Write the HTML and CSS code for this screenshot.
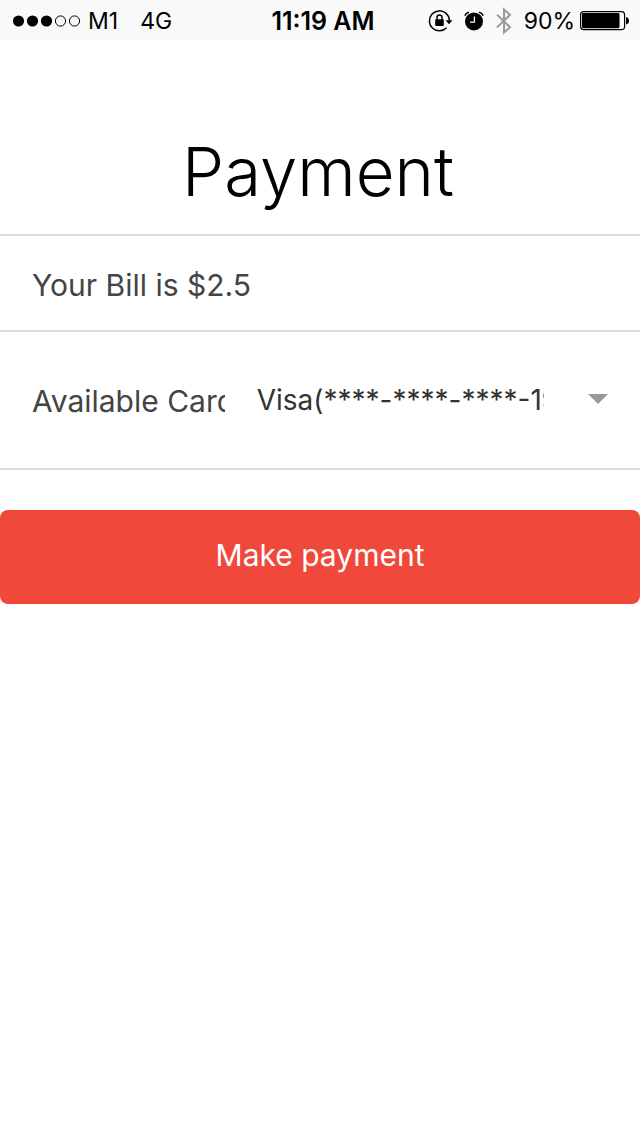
FILE: index.html
```html
<!DOCTYPE html>
<html lang="en">
<head>
<meta charset="utf-8">
<meta name="viewport" content="width=device-width, initial-scale=1">
<title>Payment</title>
<link rel="stylesheet" href="styles.css">
</head>
<body>
<header class="status">
  <div class="status-left">
    <svg width="68" height="14" viewBox="0 0 68 14" aria-hidden="true">
      <circle cx="5.5" cy="7" r="5.6"/><circle cx="19.5" cy="7" r="5.6"/><circle cx="33.5" cy="7" r="5.6"/>
      <g fill="none" stroke="#000" stroke-width="1"><circle cx="47.5" cy="7" r="5.1"/><circle cx="61.5" cy="7" r="5.1"/></g>
    </svg>
    <span class="carrier">M1</span>
    <span>4G</span>
  </div>
  <div class="status-time">11:19 AM</div>
  <div class="status-right">
    <svg width="25" height="24" viewBox="0 0 25 24" aria-hidden="true">
      <path d="M17.8 4.2A10 10 0 0 1 21.4 11.5M18.6 18.8A10 10 0 1 1 17.8 4.2" fill="none" stroke="#000" stroke-width="1.5"/>
      <path d="M17.6 11.2h6.8L21 15.2z"/>
      <rect x="7.2" y="10.2" width="8.6" height="6.8" rx=".8"/>
      <path d="M9 11V8.6a2.5 2.5 0 0 1 5 0V11" fill="none" stroke="#000" stroke-width="1.5"/>
    </svg>
    <svg class="alarm" width="20" height="20" viewBox="0 0 20 20" aria-hidden="true">
      <circle cx="10" cy="10.4" r="9"/>
      <path d="M.8 4.6Q2 1.8 5 1.2M19.2 4.6Q18 1.8 15 1.2" fill="none" stroke="#000" stroke-width="1.5"/>
      <path d="M10.4 5.6v5.6H6" fill="none" stroke="#f9f9f9" stroke-width="1.3"/>
    </svg>
    <svg width="16" height="28" viewBox="0 0 16 28" aria-hidden="true">
      <path d="M1 7.6l13 12.6-6 5.4V2.4l6 5.4L1 20.4" fill="none" stroke="#999" stroke-width="2"/>
    </svg>
    <span class="charge">90%</span>
    <svg width="49" height="20" viewBox="0 0 49 20" aria-hidden="true">
      <rect x=".6" y=".6" width="44" height="18" rx="3.2" fill="none" stroke="#000" stroke-width="1.2"/>
      <rect x="2" y="2" width="37.5" height="15.2" rx="1.4"/>
      <path d="M46 6q3 .5 3 3.7t-3 3.7z"/>
    </svg>
  </div>
</header>
<main>
  <h1 class="title">Payment</h1>
  <form class="form">
    <p class="row bill">Your Bill is $2.5</p>
    <div class="row card">
      <label class="card-label" for="card">Available Card</label>
      <span class="card-select">
        <select id="card"><option>Visa(****-****-****-1991)</option></select>
        <svg width="20" height="10" viewBox="0 0 20 10" aria-hidden="true"><path d="M0 0h20L10 10z" fill="#999"/></svg>
      </span>
    </div>
    <button class="pay" type="button">Make payment</button>
  </form>
</main>
</body>
</html>
```
FILE: styles.css
```css
* { box-sizing: border-box; }
body {
  margin: 0;
  background: #fff;
  color: #000;
  font-family: Inter, "Liberation Sans", sans-serif;
}
svg { display: block; flex: none; }

.status {
  display: grid;
  grid-template-columns: 1fr auto 1fr;
  align-items: center;
  height: 40px;
  padding: 1px 11px 0 13px;
  background: #f9f9f9;
  font-size: 23px;
  line-height: 40px;
  white-space: nowrap;
}
.status-left,
.status-right { display: flex; align-items: center; }
.status-right { justify-content: flex-end; }
.carrier { margin: 0 22px 0 7px; }
.status-time {
  padding-left: 4px;
  font-size: 25px;
  font-weight: 600;
}
.alarm { margin: 0 12px 0 11px; }
.charge { margin: 0 5px 0 12px; }

.title {
  margin: 0;
  padding: 92px 4px 22px 0;
  font-size: 67px;
  font-weight: 300;
  line-height: 80px;
  text-align: center;
}

.row {
  margin: 0;
  border-top: 2px solid #ddd;
  color: #444;
  font-size: 30px;
  line-height: 40px;
}
.bill { padding: 29px 32px 25px; }
.card {
  display: flex;
  align-items: center;
  padding: 49px 32px 47px;
  border-bottom: 2px solid #ddd;
}
.card-label {
  flex: 1;
  margin-right: 32px;
  overflow: hidden;
  white-space: nowrap;
}
.card-select {
  position: relative;
  display: flex;
  flex: 0 0 61%;
  align-items: center;
  min-width: 0;
}
.card-select select {
  appearance: none;
  width: 100%;
  height: 40px;
  margin: 0;
  padding: 0 64px 2px 0;
  border: 0;
  background: none;
  color: #333;
  font: 28px/36px Inter, "Liberation Sans", sans-serif;
  text-overflow: clip;
}
.card-select svg {
  position: absolute;
  right: 0;
  bottom: 17px;
  pointer-events: none;
}

.pay {
  display: block;
  width: 100%;
  margin: 40px 0 0;
  padding: 25px 24px 29px;
  border: 0;
  border-radius: 8px;
  background: #f0483a;
  color: #fff;
  font: 30px/40px Inter, "Liberation Sans", sans-serif;
  text-align: center;
}
```
